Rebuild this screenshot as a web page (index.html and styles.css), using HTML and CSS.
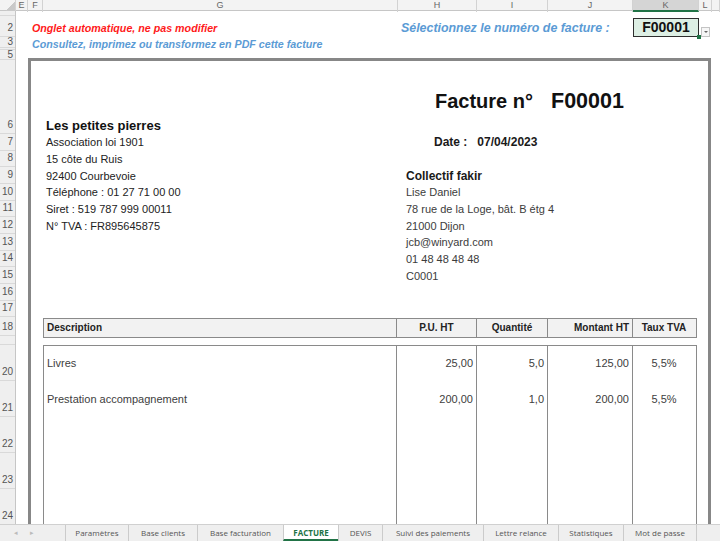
FILE: index.html
```html
<!DOCTYPE html>
<html lang="fr">

<head>
    <meta charset="UTF-8">
    <meta name="viewport" content="width=device-width, initial-scale=1.0">
    <title>FACTURE</title>
    <link rel="stylesheet" href="styles.css">
</head>

<body>
    <div class="excel">
        <!-- en-têtes de colonnes -->
        <div class="colheads">
            <span class="corner"></span>
            <span>E</span>
            <span>F</span>
            <span>G</span>
            <span>H</span>
            <span>I</span>
            <span>J</span>
            <span class="on">K</span>
            <span>L</span>
            <span></span>
        </div>

        <div class="sheet">
            <!-- numéros de lignes -->
            <div class="rowheads">
                <div class="r1"></div>
                <div class="r2">2</div>
                <div class="r3 mid">3</div>
                <div class="r4"></div>
                <div class="r5 mid">5</div>
                <div class="r6">6</div>
                <div class="rl">7</div>
                <div class="rl">8</div>
                <div class="rl">9</div>
                <div class="rl">10</div>
                <div class="rl">11</div>
                <div class="rl">12</div>
                <div class="rl">13</div>
                <div class="rl">14</div>
                <div class="rl">15</div>
                <div class="rl">16</div>
                <div class="rl">17</div>
                <div class="r18">18</div>
                <div class="r19"></div>
                <div class="rt">20</div>
                <div class="rt">21</div>
                <div class="rt">22</div>
                <div class="rt">23</div>
                <div class="rt">24</div>
            </div>

            <div class="cells">
                <div class="top">
                    <div class="notes">
                        <p class="warn">Onglet automatique, ne pas modifier</p>
                        <p class="info">Consultez, imprimez ou transformez en PDF cette facture</p>
                    </div>
                    <div class="pick-label">Sélectionnez le numéro de facture :</div>
                    <div class="pick">F00001</div>
                    <div class="pick-btn"></div>
                </div>

                <div class="invoice">
                    <div class="title">Facture n°<span class="num">F00001</span></div>

                    <div class="parties">
                        <div class="seller">
                            <p class="name">Les petites pierres</p>
                            <p>Association loi 1901</p>
                            <p>15 côte du Ruis</p>
                            <p>92400 Courbevoie</p>
                            <p>Téléphone : 01 27 71 00 00</p>
                            <p>Siret : 519 787 999 00011</p>
                            <p>N° TVA : FR895645875</p>
                        </div>
                        <div class="buyer">
                            <p></p>
                            <p class="date">Date :<span>07/04/2023</span></p>
                            <p></p>
                            <p class="name">Collectif fakir</p>
                            <p>Lise Daniel</p>
                            <p>78 rue de la Loge, bât. B étg 4</p>
                            <p>21000 Dijon</p>
                            <p>jcb@winyard.com</p>
                            <p>01 48 48 48 48</p>
                            <p>C0001</p>
                        </div>
                    </div>

                    <div class="lines">
                        <div class="thead">
                            <div class="left">Description</div>
                            <div class="center">P.U. HT</div>
                            <div class="center">Quantité</div>
                            <div class="right">Montant HT</div>
                            <div class="center">Taux TVA</div>
                        </div>
                        <div class="tbody">
                            <div class="left">Livres</div>
                            <div class="right">25,00</div>
                            <div class="right">5,0</div>
                            <div class="right">125,00</div>
                            <div class="center">5,5%</div>

                            <div class="left">Prestation accompagnement</div>
                            <div class="right">200,00</div>
                            <div class="right">1,0</div>
                            <div class="right">200,00</div>
                            <div class="center">5,5%</div>

                            <div></div><div></div><div></div><div></div><div></div>
                            <div></div><div></div><div></div><div></div><div></div>
                            <div></div><div></div><div></div><div></div><div></div>
                        </div>
                    </div>
                </div>
            </div>
        </div>

        <!-- onglets -->
        <div class="tabs">
            <div class="nav"><span>◂</span><span>▸</span></div>
            <div class="tab w63">Paramètres</div>
            <div class="tab w69">Base clients</div>
            <div class="tab w86">Base facturation</div>
            <div class="tab w55 active">FACTURE</div>
            <div class="tab w44">DEVIS</div>
            <div class="tab w101">Suivi des paiements</div>
            <div class="tab w75">Lettre relance</div>
            <div class="tab w65">Statistiques</div>
            <div class="tab w74">Mot de passe</div>
        </div>
    </div>
</body>

</html>
```

FILE: styles.css
```css
* {
    box-sizing: border-box;
}

body {
    margin: 0;
    width: 720px;
    height: 541px;
    overflow: hidden;
    background-color: white;
    font-family: "Liberation Sans", Arial, sans-serif;
    color: #222;
}

p {
    margin: 0;
}

.excel {
    display: flex;
    flex-direction: column;
    height: 541px;
}

/* en-têtes de colonnes */
.colheads {
    display: grid;
    grid-template-columns: 16px 12px 15px 355px 79px 71px 85px 66px 13px 1fr;
    height: 11px;
    background-color: #f3f3f3;
    border-bottom: 1px solid #c6c6c6;
}

.colheads span {
    border-right: 1px solid #d2d2d2;
    font-size: 9px;
    line-height: 10px;
    text-align: center;
    color: #666;
}

.colheads .corner {
    background: linear-gradient(135deg, transparent 60%, #c9c9c9 60%);
}

.colheads .on {
    background-color: #d5d5d5;
    border-bottom: 2px solid #217346;
}

/* feuille */
.sheet {
    flex: 1;
    display: flex;
    overflow: hidden;
}

.rowheads {
    width: 16px;
    flex: none;
    background-color: #efefef;
    border-right: 1px solid #c6c6c6;
}

.rowheads div {
    display: flex;
    align-items: flex-end;
    justify-content: flex-end;
    overflow: hidden;
    border-bottom: 1px solid #d9d9d9;
    padding: 0 2px 1px 0;
    font-size: 10px;
    line-height: 14px;
    color: #555;
}

.rowheads .mid {
    align-items: center;
    padding-bottom: 0;
}

.r1 { height: 5px; }
.r2 { height: 21px; }
.r3 { height: 11px; }
.r4 { height: 2px; }
.r5 { height: 10px; }
.r6 { height: 74px; }
.rl { height: 16.67px; }
.r18 { height: 19px; }
.r19 { height: 9px; }
.rt { height: 36px; flex: none; }

.cells {
    flex: 1;
    display: flex;
    flex-direction: column;
    overflow: hidden;
}

/* zone du haut */
.top {
    display: flex;
    height: 47px;
    flex: none;
}

.notes {
    width: 385px;
    padding: 9px 0 0 16px;
    font-size: 10.7px;
    font-weight: bold;
    font-style: italic;
    line-height: 16px;
}

.warn {
    color: #ff1a1a;
}

.info {
    color: #5b9bd5;
}

.pick-label {
    width: 232px;
    padding-top: 9px;
    font-size: 12.4px;
    font-weight: bold;
    font-style: italic;
    line-height: 16px;
    color: #5b9bd5;
}

.pick {
    position: relative;
    width: 66px;
    height: 19px;
    margin-top: 7px;
    border: 1px solid #2e2e2e;
    background-color: #ddefe4;
    font-size: 14px;
    font-weight: bold;
    line-height: 17px;
    text-align: center;
    color: #111;
}

.pick::after {
    content: "";
    position: absolute;
    right: -3px;
    bottom: -3px;
    width: 4px;
    height: 4px;
    background-color: #217346;
}

.pick-btn {
    width: 9px;
    height: 10px;
    margin: 16px 0 0 2px;
    border: 1px solid #c4c4c4;
    background-color: #f6f6f6;
    position: relative;
}

.pick-btn::after {
    content: "";
    position: absolute;
    left: 2px;
    top: 3px;
    border-left: 2px solid transparent;
    border-right: 2px solid transparent;
    border-top: 2px solid #666;
}

/* facture */
.invoice {
    flex: 1;
    width: 683px;
    margin-left: 12px;
    border: 3px solid #878787;
    border-bottom: none;
}

.title {
    margin: 28.5px 0 0 404px;
    font-size: 20px;
    font-weight: bold;
    line-height: 23px;
    color: #111;
}

.title .num {
    margin-left: 18px;
    font-size: 21.5px;
}

.parties {
    display: flex;
    margin-top: 5.2px;
}

.parties p {
    height: 16.67px;
    font-size: 11px;
    line-height: 16.67px;
}

.seller {
    width: 375px;
    padding-left: 15px;
}

.seller .name {
    font-size: 13px;
    font-weight: bold;
    color: #111;
}

.buyer p {
    color: #3c3c3c;
}

.buyer .name {
    font-size: 12px;
    font-weight: bold;
    color: #1a1a1a;
}

.buyer .date {
    margin-left: 28px;
    font-size: 12px;
    font-weight: bold;
    color: #1a1a1a;
}

.buyer .date span {
    margin-left: 10px;
}

/* lignes de facture */
.lines {
    width: 654px;
    margin: 33.6px 0 0 12px;
}

.thead,
.tbody {
    display: grid;
    grid-template-columns: 352px 80px 71px 85px 63px;
    border: 1.5px solid #8a8a8a;
}

.thead {
    height: 20px;
    background-color: #f2f2f2;
    font-size: 10px;
    font-weight: bold;
    line-height: 17px;
    color: #222;
}

.tbody {
    margin-top: 7px;
    border-bottom: none;
    grid-auto-rows: 36px;
    font-size: 11px;
    line-height: 34px;
    color: #404040;
}

.thead div + div,
.tbody div:not(:nth-child(5n+1)) {
    border-left: 1.5px solid #8a8a8a;
}

.left {
    padding-left: 3px;
}

.center {
    text-align: center;
}

.right {
    text-align: right;
    padding-right: 3px;
}

/* onglets */
.tabs {
    display: flex;
    height: 17px;
    flex: none;
    background-color: #efefef;
    border-top: 1px solid #d0d0d0;
    font-family: "Open Sans", sans-serif;
    font-size: 8px;
    color: #555;
}

.nav {
    width: 65px;
    display: flex;
    gap: 12px;
    padding-left: 14px;
    color: #bbb;
    font-size: 7px;
    line-height: 15px;
}

.tab {
    border-left: 1px solid #cbcbcb;
    text-align: center;
    line-height: 15px;
    white-space: nowrap;
}

.tab.active {
    background-color: white;
    color: #217346;
    font-weight: bold;
    border-bottom: 2px solid #217346;
}

.w44 { width: 44px; }
.w55 { width: 55px; }
.w63 { width: 63px; }
.w65 { width: 65px; }
.w69 { width: 69px; }
.w74 { width: 74px; border-right: 1px solid #cbcbcb; }
.w75 { width: 75px; }
.w86 { width: 86px; }
.w101 { width: 101px; }
```
